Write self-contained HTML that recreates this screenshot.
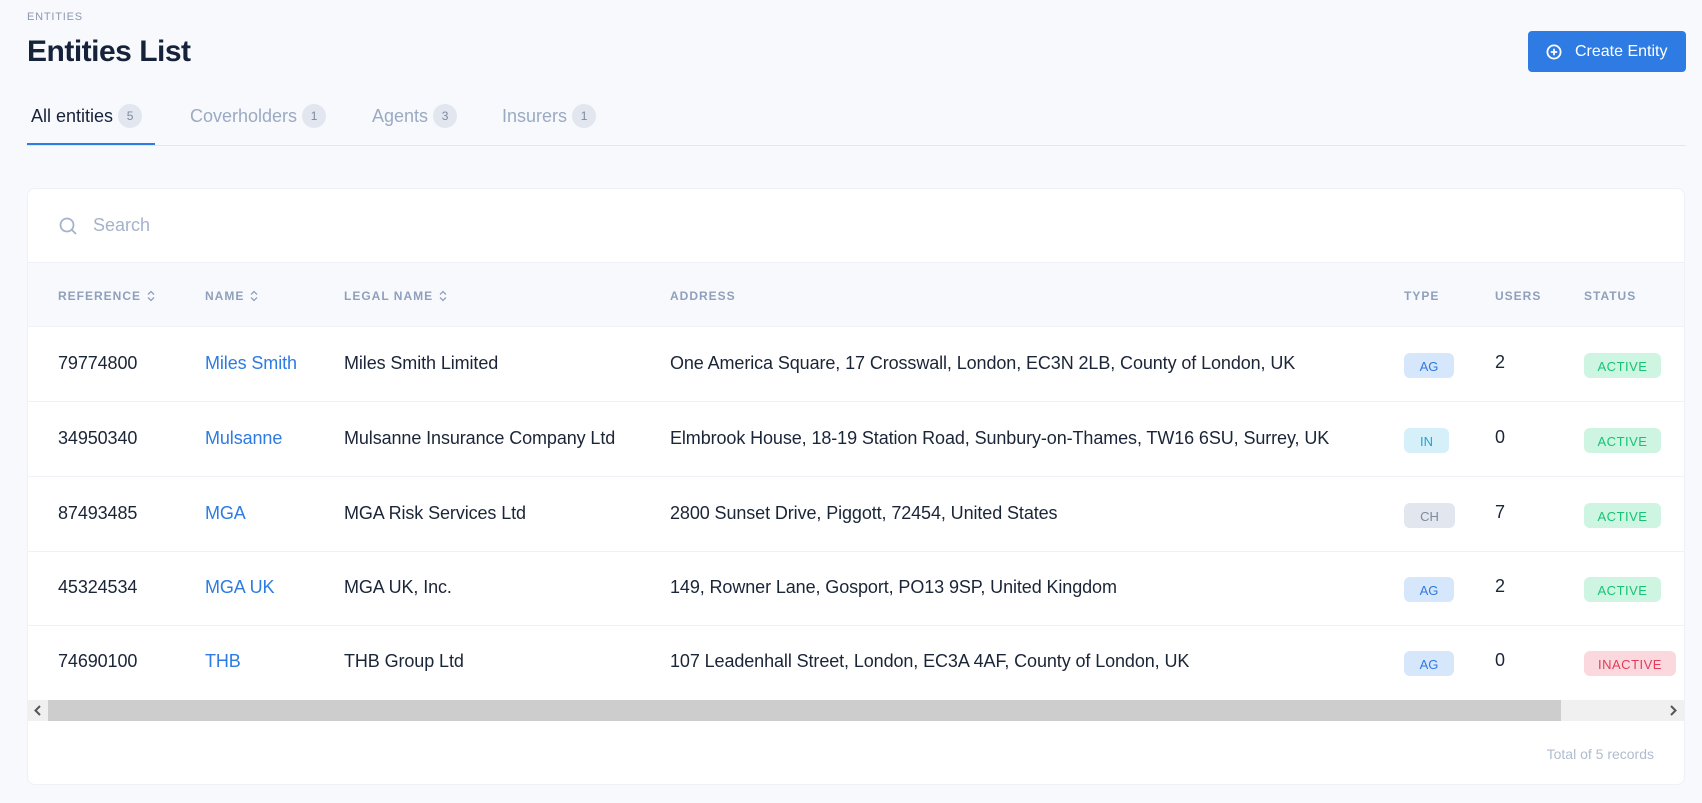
<!DOCTYPE html>
<html><head><meta charset="utf-8"><style>
*{box-sizing:border-box;margin:0;padding:0}
body{width:1702px;height:803px;background:#f8f9fc;font-family:"Liberation Sans",sans-serif;color:#1b2538;position:relative;overflow:hidden}
.abs{position:absolute}
.crumb{left:27px;top:11px;font-size:11px;color:#8b98b0;letter-spacing:.8px}
.title{left:27px;top:35px;font-size:30px;font-weight:bold;color:#16223a;letter-spacing:-.5px}
.btn{left:1528px;top:31px;width:158px;height:41px;background:#2d7be3;border-radius:4px;color:#fff;font-size:16px;display:flex;align-items:center;padding-left:18px}
.btn svg{margin-right:13px}
.tabs{left:27px;top:100px;height:46px;width:1659px;border-bottom:1px solid #e1e8f2}
.tab{position:absolute;top:4px;font-size:18px;color:#9aaac2;display:flex;align-items:center}
.tab b{font-weight:normal;display:inline-block;background:#e2e6ee;color:#7d8aa0;font-size:12px;width:24px;height:24px;line-height:24px;text-align:center;border-radius:12px;margin-left:5px}
.tab.on{color:#16223a}
.uline{left:27px;top:143px;width:128px;height:2px;background:#2d7be3}
.card{left:27px;top:188px;width:1658px;height:597px;background:#fff;border:1px solid #eef1f6;border-radius:8px;overflow:hidden}
.search{position:absolute;left:0;top:0;width:100%;height:74px;border-bottom:1px solid #eef1f6;display:flex;align-items:center;padding-left:30px;color:#a4b3cb;font-size:18px}
.search svg{margin-right:15px}
.thead{position:absolute;left:0;top:74px;width:100%;height:64px;background:#f8f9fc;border-bottom:1px solid #eef1f6}
.th{position:absolute;top:26px;font-size:12px;font-weight:bold;color:#8ea0bc;letter-spacing:1px;display:flex;align-items:center}
.th svg{margin-left:6px}
.row{position:absolute;left:0;width:100%;height:75px;border-bottom:1px solid #eef1f6}
.c{position:absolute;top:26px;font-size:18px;letter-spacing:-.1px;color:#1b2538;white-space:nowrap}
.lnk{color:#2d7be3}
.bdg{position:absolute;top:26px;height:25px;border-radius:6px;font-size:13px;line-height:27px;text-align:center}
.ag{background:#d6e6fb;color:#2d7be3;width:50px}
.in{background:#d6f0f9;color:#27a1d2;width:45px}
.ch{background:#e2e6ee;color:#7d8aa0;width:51px}
.act{background:#cdf5e2;color:#14c474;width:77px;letter-spacing:.5px}
.ina{background:#fbd8de;color:#e23b58;width:92px;letter-spacing:.5px}
.sb{position:absolute;left:0;top:511px;width:100%;height:21px;background:#f0f0f0}
.thumb{position:absolute;left:20px;top:0;width:1513px;height:21px;background:#cdcdcd}
.total{position:absolute;right:30px;top:557px;font-size:14px;color:#b0bccf}
</style></head><body>
<div class="abs crumb">ENTITIES</div>
<div class="abs title">Entities List</div>
<div class="abs btn"><svg width="16" height="16" viewBox="0 0 16 16" fill="none" stroke="#fff" stroke-width="1.8"><circle cx="8" cy="8" r="6.6"/><path d="M8 4.8v6.4M4.8 8h6.4"/></svg>Create Entity</div>
<div class="abs tabs">
<div class="tab on" style="left:4px">All entities<b>5</b></div>
<div class="tab" style="left:163px">Coverholders<b>1</b></div>
<div class="tab" style="left:345px">Agents<b>3</b></div>
<div class="tab" style="left:475px">Insurers<b>1</b></div>
</div>
<div class="abs uline"></div>
<div class="abs card">
<div class="search"><svg width="20" height="20" viewBox="0 0 20 20" fill="none" stroke="#a4b3cb" stroke-width="1.8"><circle cx="9" cy="9" r="6.5"/><path d="M14 14l4 4"/></svg>Search</div>
<div class="thead">
<div class="th" style="left:30px">REFERENCE<svg width="8" height="12" viewBox="0 0 8 12" fill="none" stroke="#8ea0bc" stroke-width="1.3"><path d="M1 4.5L4 1.5 7 4.5M1 7.5L4 10.5 7 7.5"/></svg></div>
<div class="th" style="left:177px">NAME<svg width="8" height="12" viewBox="0 0 8 12" fill="none" stroke="#8ea0bc" stroke-width="1.3"><path d="M1 4.5L4 1.5 7 4.5M1 7.5L4 10.5 7 7.5"/></svg></div>
<div class="th" style="left:316px">LEGAL NAME<svg width="8" height="12" viewBox="0 0 8 12" fill="none" stroke="#8ea0bc" stroke-width="1.3"><path d="M1 4.5L4 1.5 7 4.5M1 7.5L4 10.5 7 7.5"/></svg></div>
<div class="th" style="left:642px">ADDRESS</div>
<div class="th" style="left:1376px">TYPE</div>
<div class="th" style="left:1467px">USERS</div>
<div class="th" style="left:1556px">STATUS</div>
</div>
<div class="row" style="top:138px"><div class="c" style="left:30px">79774800</div><div class="c lnk" style="left:177px">Miles Smith</div><div class="c" style="left:316px">Miles Smith Limited</div><div class="c" style="left:642px">One America Square, 17 Crosswall, London, EC3N 2LB, County of London, UK</div><div class="bdg ag" style="left:1376px">AG</div><div class="c" style="left:1467px;top:25px">2</div><div class="bdg act" style="left:1556px">ACTIVE</div></div>
<div class="row" style="top:213px"><div class="c" style="left:30px">34950340</div><div class="c lnk" style="left:177px">Mulsanne</div><div class="c" style="left:316px">Mulsanne Insurance Company Ltd</div><div class="c" style="left:642px">Elmbrook House, 18-19 Station Road, Sunbury-on-Thames, TW16 6SU, Surrey, UK</div><div class="bdg in" style="left:1376px">IN</div><div class="c" style="left:1467px;top:25px">0</div><div class="bdg act" style="left:1556px">ACTIVE</div></div>
<div class="row" style="top:288px"><div class="c" style="left:30px">87493485</div><div class="c lnk" style="left:177px">MGA</div><div class="c" style="left:316px">MGA Risk Services Ltd</div><div class="c" style="left:642px">2800 Sunset Drive, Piggott, 72454, United States</div><div class="bdg ch" style="left:1376px">CH</div><div class="c" style="left:1467px;top:25px">7</div><div class="bdg act" style="left:1556px">ACTIVE</div></div>
<div class="row" style="top:362px"><div class="c" style="left:30px">45324534</div><div class="c lnk" style="left:177px">MGA UK</div><div class="c" style="left:316px">MGA UK, Inc.</div><div class="c" style="left:642px">149, Rowner Lane, Gosport, PO13 9SP, United Kingdom</div><div class="bdg ag" style="left:1376px">AG</div><div class="c" style="left:1467px;top:25px">2</div><div class="bdg act" style="left:1556px">ACTIVE</div></div>
<div class="row" style="top:436px;border-bottom:none"><div class="c" style="left:30px">74690100</div><div class="c lnk" style="left:177px">THB</div><div class="c" style="left:316px">THB Group Ltd</div><div class="c" style="left:642px">107 Leadenhall Street, London, EC3A 4AF, County of London, UK</div><div class="bdg ag" style="left:1376px">AG</div><div class="c" style="left:1467px;top:25px">0</div><div class="bdg ina" style="left:1556px">INACTIVE</div></div>
<div class="sb"><div class="thumb"></div><svg style="position:absolute;left:5px;top:5px" width="10" height="11" viewBox="0 0 10 11"><path d="M7 1L2.5 5.5 7 10" stroke="#555" stroke-width="2" fill="none"/></svg><svg style="position:absolute;right:6px;top:5px" width="10" height="11" viewBox="0 0 10 11"><path d="M3 1l4.5 4.5L3 10" stroke="#555" stroke-width="2" fill="none"/></svg></div>
<div class="total">Total of 5 records</div>
</div>
</body></html>
